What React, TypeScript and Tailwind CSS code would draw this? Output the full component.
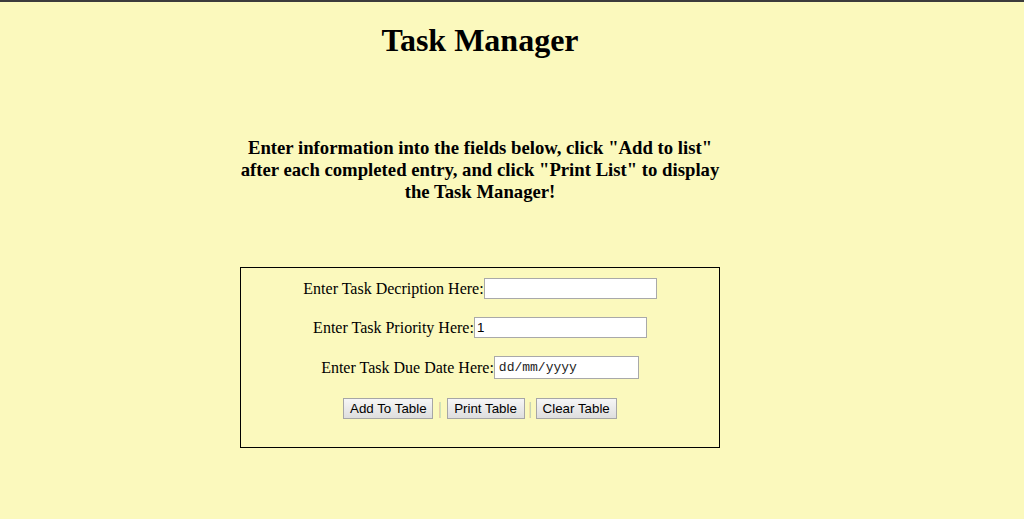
import React from "react";

export default function App() {
  const serif = { fontFamily: '"Liberation Serif", "Times New Roman", serif' };
  const sans = { fontFamily: '"Liberation Sans", Arial, sans-serif' };
  return (
    <div
      className="min-h-[519px] w-full bg-[#fbf9bd] border-t-2 border-[#3c3c3c] text-black"
      style={serif}
    >
      <div className="ml-[240px] w-[480px] flex flex-col items-center">
        <h1 className="mt-[20px] text-[32px] leading-[37px] font-bold text-center">
          Task Manager
        </h1>
        <p className="mt-[78px] w-[480px] text-[18.72px] leading-[22px] font-bold text-center">
          Enter information into the fields below, click "Add to list" after each
          completed entry, and click "Print List" to display the Task Manager!
        </p>
        <div className="mt-[64px] w-[480px] border border-black flex flex-col items-center pt-[9px] pb-[27px]">
          <div className="h-[23px] flex items-center text-[16px]">
            <span>Enter Task Decription Here:</span>
            <input
              type="text"
              readOnly
              className="w-[173px] h-[21px] border border-[#a9a9a9] bg-white px-[2px] text-[13.33px] outline-none"
              style={sans}
            />
          </div>
          <div className="mt-[16px] h-[23px] flex items-center text-[16px]">
            <span>Enter Task Priority Here:</span>
            <input
              type="text"
              readOnly
              value="1"
              className="w-[173px] h-[21px] border border-[#a9a9a9] bg-white px-[2px] text-[13.33px] text-black outline-none"
              style={sans}
            />
          </div>
          <div className="mt-[17px] h-[23px] flex items-center text-[16px]">
            <span>Enter Task Due Date Here:</span>
            <div
              className="w-[145px] h-[23px] border border-[#a9a9a9] bg-white pl-[4px] flex items-center text-[13px] text-[#222]"
              style={{ fontFamily: '"Liberation Mono", "Courier New", monospace' }}
            >
              dd/mm/yyyy
            </div>
          </div>
          <div className="mt-[18px] h-[23px] flex items-center text-[13.33px]" style={sans}>
            <button className="h-[21px] w-[90px] border border-[#a6a6a6] bg-gradient-to-b from-[#f6f6f6] to-[#dedede] text-black flex items-center justify-center">
              Add To Table
            </button>
            <span className="mx-[5px] text-[#b5b5a5] text-[16px]" style={serif}>|</span>
            <button className="h-[21px] w-[78px] border border-[#a6a6a6] bg-gradient-to-b from-[#f6f6f6] to-[#dedede] text-black flex items-center justify-center">
              Print Table
            </button>
            <span className="mx-[4px] text-[#b5b5a5] text-[16px]" style={serif}>|</span>
            <button className="h-[21px] w-[81px] border border-[#a6a6a6] bg-gradient-to-b from-[#f6f6f6] to-[#dedede] text-black flex items-center justify-center">
              Clear Table
            </button>
          </div>
        </div>
      </div>
    </div>
  );
}
